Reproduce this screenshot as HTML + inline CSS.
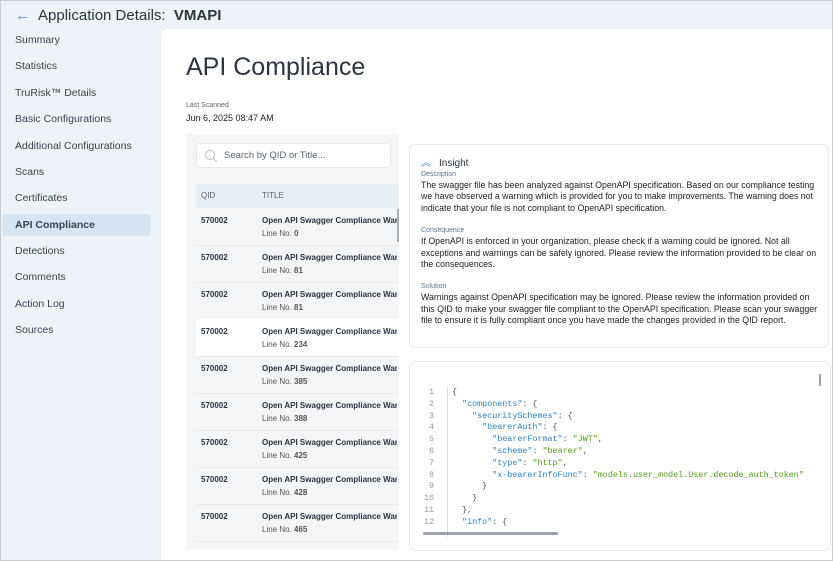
<html><head><style>
body{margin:0;width:833px;height:561px;overflow:hidden;font-family:"Liberation Sans",sans-serif;background:#fff}
.frame{position:absolute;left:0;top:0;width:831px;height:559px;border:1px solid #c9cdd2;background:#edf3f9;overflow:hidden}
.hdr{position:absolute;left:14px;top:6px;font-size:15px;color:#2b3440}
.hdr .ar{color:#5a8fd6;margin-right:8px}
.nav{position:absolute;left:0;top:28px;width:160px}
.nav div{height:26.4px;line-height:22px;padding-left:14px;font-size:10.5px;color:#3a4350}
.nav .act{background:#d6e5f3;font-weight:bold;margin:0 10px 0 1px;padding-left:13px;border-radius:4px;height:22px;margin-bottom:4px}
.main{position:absolute;left:160px;top:28px;width:680px;height:540px;background:#fff;border-top-left-radius:8px}
h1{position:absolute;left:25px;top:24px;margin:0;font-weight:normal;font-size:25px;color:#2d3540}
.ls{position:absolute;left:25px;top:73px;font-size:7px;color:#5c6670}
.ld{position:absolute;left:25px;top:84px;font-size:9px;color:#222}
.list{position:absolute;left:25px;top:105px;width:213px;height:415px;background:#f3f5f7;overflow:hidden}
.search{position:absolute;left:10px;top:9px;width:193px;height:23px;background:#fff;border-radius:4px;border:1px solid #e8ebee;font-size:9.5px;color:#5c6670;line-height:23px}
.th{position:absolute;left:10px;top:50px;width:203px;height:24px;background:#e7eef5;font-size:8px;color:#556070;line-height:24px}
.row{position:absolute;left:10px;width:203px;height:37px;border-bottom:1px solid #e6e9ec;font-size:8px;color:#2b3440}
.row b{position:absolute;top:8px}
.row .t{position:absolute;left:66px;top:8px;font-weight:bold;white-space:nowrap;width:135px;overflow:hidden}
.row .l{position:absolute;left:66px;top:21px;color:#555}
.card{position:absolute;background:#fff;border:1px solid #e8ebee;border-radius:6px}
.ins{font-size:8.8px;color:#222;line-height:11.7px;white-space:nowrap;overflow:hidden}
.ins .s{color:#5b7390;font-size:7px;line-height:10px}
pre{margin:0;font-family:"Liberation Mono",monospace;font-size:8.4px;line-height:11.8px;color:#555}
.k{color:#2c7fc0}.v{color:#4f9b1a}
</style></head><body><div class="frame">
<div class="hdr"><span class="ar">←</span>Application Details:&nbsp; <b>VMAPI</b></div>
<div class="nav">
<div>Summary</div><div>Statistics</div><div>TruRisk™ Details</div><div>Basic Configurations</div><div>Additional Configurations</div><div>Scans</div><div>Certificates</div><div class="act">API Compliance</div><div>Detections</div><div>Comments</div><div>Action Log</div><div>Sources</div>
</div>
<div class="main">
<h1>API Compliance</h1>
<div class="ls">Last Scanned</div><div class="ld">Jun 6, 2025 08:47 AM</div>
<div class="list">
<div class="search"><svg width="14" height="14" style="position:absolute;left:7px;top:5px" viewBox="0 0 14 14"><circle cx="6" cy="6" r="4.5" fill="none" stroke="#b5bcc4" stroke-width="1"/><path d="M9.3 9.3L13 13" stroke="#b5bcc4"/></svg><span style="position:absolute;left:27px">Search by QID or Title...</span></div>
<div class="th"><span style="position:absolute;left:5px">QID</span><span style="position:absolute;left:66px">TITLE</span></div>
<div class="row" style="top:74px"><b style="left:5px">570002</b><span class="t">Open API Swagger Compliance Warn</span><span class="l">Line No. <b style="position:static">0</b></span></div>
<div class="row" style="top:111px"><b style="left:5px">570002</b><span class="t">Open API Swagger Compliance Warn</span><span class="l">Line No. <b style="position:static">81</b></span></div>
<div class="row" style="top:148px"><b style="left:5px">570002</b><span class="t">Open API Swagger Compliance Warn</span><span class="l">Line No. <b style="position:static">81</b></span></div>
<div class="row" style="top:185px;background:#fff"><b style="left:5px">570002</b><span class="t">Open API Swagger Compliance Warn</span><span class="l">Line No. <b style="position:static">234</b></span></div>
<div class="row" style="top:222px"><b style="left:5px">570002</b><span class="t">Open API Swagger Compliance Warn</span><span class="l">Line No. <b style="position:static">385</b></span></div>
<div class="row" style="top:259px"><b style="left:5px">570002</b><span class="t">Open API Swagger Compliance Warn</span><span class="l">Line No. <b style="position:static">388</b></span></div>
<div class="row" style="top:296px"><b style="left:5px">570002</b><span class="t">Open API Swagger Compliance Warn</span><span class="l">Line No. <b style="position:static">425</b></span></div>
<div class="row" style="top:333px"><b style="left:5px">570002</b><span class="t">Open API Swagger Compliance Warn</span><span class="l">Line No. <b style="position:static">428</b></span></div>
<div class="row" style="top:370px"><b style="left:5px">570002</b><span class="t">Open API Swagger Compliance Warn</span><span class="l">Line No. <b style="position:static">465</b></span></div>
<div style="position:absolute;left:211px;top:75px;width:2px;height:33px;background:#a9b1ba"></div>
</div>
<div class="card ins" style="left:248px;top:115px;width:420px;height:204px;padding:0 0 0 11px;box-sizing:border-box">
<div style="margin-top:13px;font-size:10px;color:#2b3440"><span style="color:#5a8fd6;margin-right:8px">︽</span>Insight</div>
<div class="s">Description</div>
The swagger file has been analyzed against OpenAPI specification. Based on our compliance testing<br>we have observed a warning which is provided for you to make improvements. The warning does not<br>indicate that your file is not compliant to OpenAPI specification.
<div class="s" style="margin-top:11px">Consequence</div>
If OpenAPI is enforced in your organization, please check if a warning could be ignored. Not all<br>exceptions and warnings can be safely ignored. Please review the information provided to be clear on<br>the consequences.
<div class="s" style="margin-top:11px">Solution</div>
Warnings against OpenAPI specification may be ignored. Please review the information provided on<br>this QID to make your swagger file compliant to the OpenAPI specification. Please scan your swagger<br>file to ensure it is fully compliant once you have made the changes provided in the QID report.
</div>
<div class="card" style="left:248px;top:332px;width:420px;height:188px;overflow:hidden">
<pre style="position:absolute;left:14px;top:25px;color:#999;text-align:right">1
2
3
4
5
6
7
8
9
10
11
12</pre>
<div style="position:absolute;left:37px;top:25px;width:1px;height:150px;background:#ddd"></div>
<pre style="position:absolute;left:42px;top:25px">{
  <span class="k">"components"</span>: {
    <span class="k">"securitySchemes"</span>: {
      <span class="k">"bearerAuth"</span>: {
        <span class="k">"bearerFormat"</span>: <span class="v">"JWT"</span>,
        <span class="k">"scheme"</span>: <span class="v">"bearer"</span>,
        <span class="k">"type"</span>: <span class="v">"http"</span>,
        <span class="k">"x-bearerInfoFunc"</span>: <span class="v">"models.user_model.User.decode_auth_token"</span>
      }
    }
  },
  <span class="k">"info"</span>: {</pre>
<div style="position:absolute;left:13px;top:170px;width:135px;height:3px;background:#9aa3ad;border-radius:2px"></div>
<div style="position:absolute;left:409px;top:12px;width:2px;height:12px;background:#9aa3ad"></div>
</div>
</div>
</div></body></html>
